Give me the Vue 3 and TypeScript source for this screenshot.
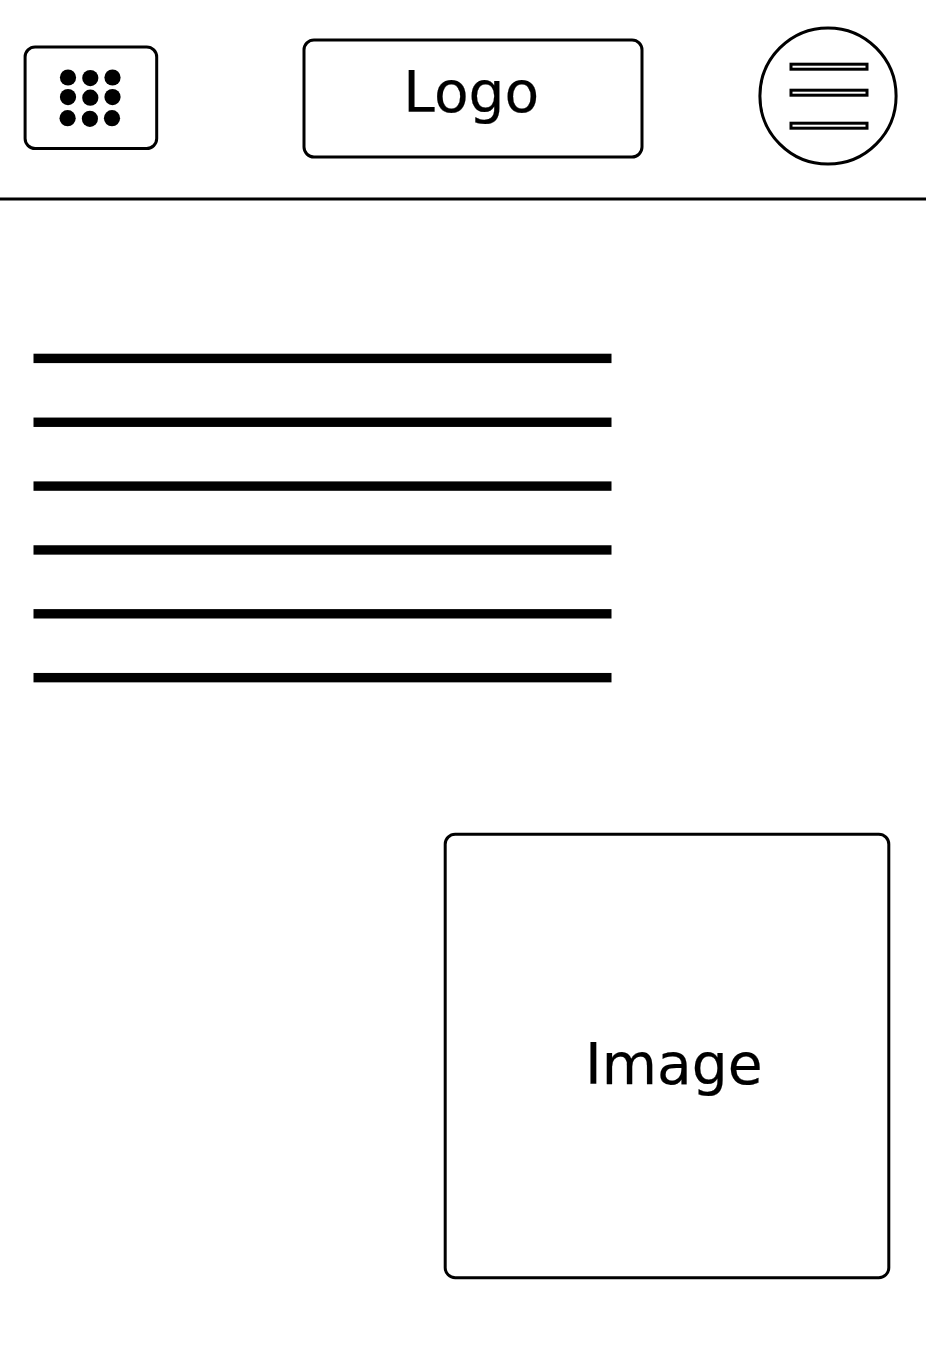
<script setup lang="ts">
interface Point {
  x: number
  y: number
}

const dots: Point[] = [
  { x: 68, y: 77.5 }, { x: 90.3, y: 78.1 }, { x: 112.5, y: 77.5 },
  { x: 68, y: 97.1 }, { x: 90.3, y: 97.7 }, { x: 112.5, y: 97.1 },
  { x: 67.6, y: 118.2 }, { x: 89.9, y: 118.8 }, { x: 112, y: 118.2 },
]
const menuBars: number[] = [64.2, 90.2, 123.2]
const textLines: number[] = [353.7, 417.55, 481.4, 545.25, 609.1, 672.95]
</script>

<template>
  <div class="page">
    <header class="header">
      <svg class="apps" viewBox="20 40 144 120" role="img" aria-label="Apps">
        <rect class="outline" x="25.1" y="47" width="131.6" height="101.5" rx="10" />
        <circle v-for="(dot, i) in dots" :key="i" :cx="dot.x" :cy="dot.y" r="8.1" />
      </svg>
      <svg class="logo" viewBox="300 30 350 140">
        <rect class="outline" x="304" y="40" width="338" height="117" rx="10" />
        <text class="label" x="403.3" y="112">Logo</text>
      </svg>
      <svg class="menu" viewBox="750 20 156 156" role="img" aria-label="Menu">
        <circle class="outline" cx="828" cy="96" r="68.1" />
        <rect v-for="y in menuBars" :key="y" class="outline" x="791" :y="y" width="76" height="5" />
      </svg>
    </header>
    <svg class="divider" viewBox="0 196 926 6">
      <path class="outline" d="M0 199H926" />
    </svg>
    <main class="content">
      <svg class="copy" viewBox="30 350 590 340">
        <rect v-for="y in textLines" :key="y" x="33.5" :y="y" width="578" height="9.4" />
      </svg>
      <svg class="picture" viewBox="440 830 455 455">
        <rect class="outline" x="445.2" y="834.2" width="443.6" height="443.5" rx="10" />
        <text class="label" x="585.1" y="1084">Image</text>
      </svg>
    </main>
  </div>
</template>

<style>
body {
  margin: 0;
  background: #fff;
}
</style>

<style scoped>
.page {
  width: 926px;
  height: 1350px;
  overflow: hidden;
  background: #fff;
}

svg {
  display: block;
  flex: none;
}

.header {
  display: flex;
  align-items: flex-start;
  justify-content: space-between;
  box-sizing: border-box;
  height: 196px;
  padding: 20px 20px 0;
}

.apps {
  width: 144px;
  height: 120px;
  margin-top: 20px;
}

.logo {
  width: 350px;
  height: 140px;
  margin: 10px 0 0 36px;
}

.menu {
  width: 156px;
  height: 156px;
}

.divider {
  width: 926px;
  height: 6px;
}

.content {
  display: flex;
  flex-direction: column;
  gap: 140px;
  padding: 148px 31px 0 30px;
}

.copy {
  width: 590px;
  height: 340px;
}

.picture {
  align-self: flex-end;
  width: 455px;
  height: 455px;
}

.outline {
  fill: none;
  stroke: #000;
  stroke-width: 3;
}

.label {
  font-family: "DejaVu Sans", sans-serif;
  font-size: 56.7px;
  fill: #000;
  stroke: #000;
  stroke-width: 0.2px;
}
</style>
